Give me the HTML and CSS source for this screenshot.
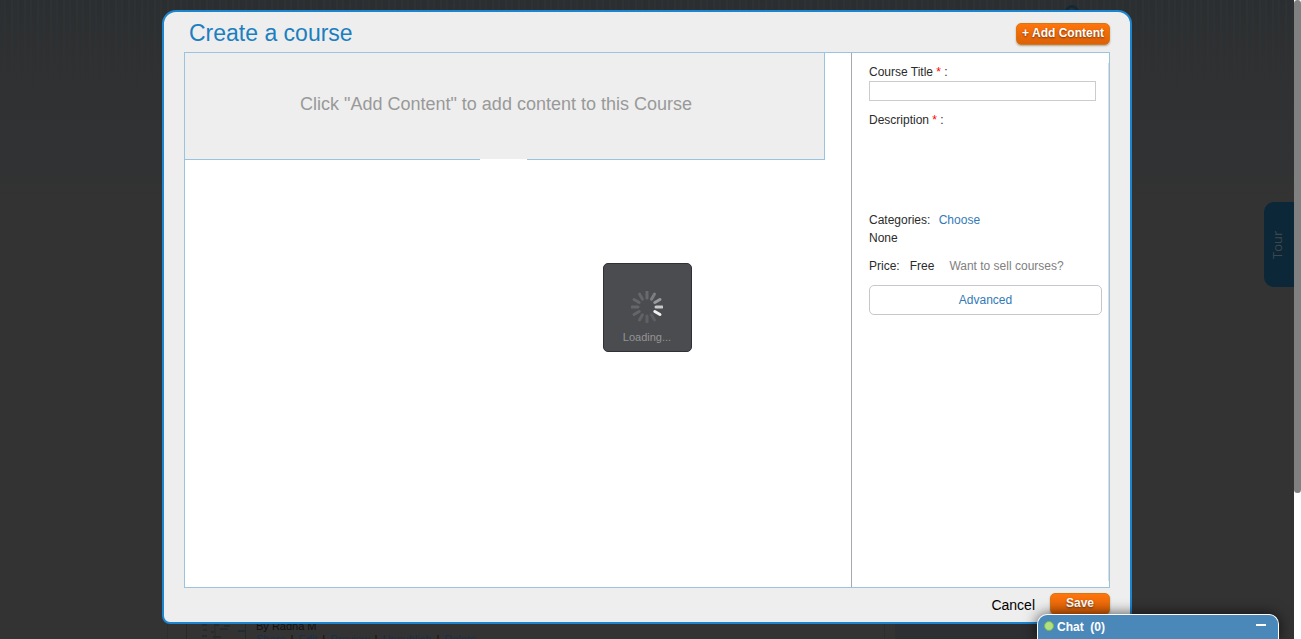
FILE: index.html
```html
<!DOCTYPE html>
<html lang="en">
<head>
<meta charset="utf-8">
<title>Create a course</title>
<link rel="stylesheet" href="styles.css">
</head>
<body>
<div class="viewport">
  <div class="page" aria-hidden="true">
    <span class="help-dot"></span>
    <div class="listing">
      <div class="course">
        <svg class="thumb" width="60" height="24" viewBox="0 0 60 24">
          <path d="M0 0V24M60 0V24" stroke="#202020"/>
          <path d="M29 0V24" stroke="#2d2f2f" stroke-width="2"/>
          <path d="M16 8h5M28 8h5M38 9h6M17 13h4M25 15h3M34 12h8M16 19h5M27 20h8" stroke="#282a2b" stroke-width="2"/>
          <path d="M52 14h8" stroke="#202c37" stroke-width="2"/>
        </svg>
        <div class="course-info">
          <div class="author">By Radha M</div>
          <div class="actions"><a href="#">Share</a> | <a href="#">Edit</a> | <a href="#">Preview</a> | <a href="#">Unpublish</a> | <a href="#">Delete</a></div>
        </div>
      </div>
      <div class="side-box"></div>
    </div>
    <div class="tour">Tour</div>
  </div>

  <main class="modal" role="dialog" aria-labelledby="dialog-title">
    <header class="modal-header">
      <h1 id="dialog-title">Create a course</h1>
      <button class="btn" type="button">+ Add Content</button>
    </header>
    <form class="panel">
      <section class="content">
        <p class="dropzone">Click "Add Content" to add content to this Course</p>
      </section>
      <aside class="details">
        <div class="fields">
          <label for="title">Course Title <span class="required">*</span> :</label>
          <input class="title-input" id="title" type="text">
          <div class="description">Description <span class="required">*</span> :</div>
          <div class="categories">Categories: <a class="choose" href="#">Choose</a></div>
          <div class="none">None</div>
          <div class="price"><span>Price:</span><span>Free</span><a class="sell" href="#">Want to sell courses?</a></div>
          <button class="advanced" type="button">Advanced</button>
        </div>
      </aside>
    </form>
    <footer class="modal-footer">
      <button class="cancel" type="button">Cancel</button>
      <button class="btn save" type="button">Save</button>
    </footer>
  </main>

  <div class="loading" role="status">
    <svg width="32" height="32" viewBox="-16 -16 32 32" stroke-width="3" stroke-linecap="round">
      <path d="M9 0H15" stroke="#c9c9c9"/>
      <path d="M9 0H15" stroke="#f0f0f0" transform="rotate(30)"/>
      <path d="M9 0H15" stroke="#5c5d60" transform="rotate(60)"/>
      <path d="M9 0H15" stroke="#5f6063" transform="rotate(90)"/>
      <path d="M9 0H15" stroke="#616265" transform="rotate(120)"/>
      <path d="M9 0H15" stroke="#646567" transform="rotate(150)"/>
      <path d="M9 0H15" stroke="#656668" transform="rotate(180)"/>
      <path d="M9 0H15" stroke="#656668" transform="rotate(210)"/>
      <path d="M9 0H15" stroke="#656668" transform="rotate(240)"/>
      <path d="M9 0H15" stroke="#68696b" transform="rotate(270)"/>
      <path d="M9 0H15" stroke="#7d7d7f" transform="rotate(300)"/>
      <path d="M9 0H15" stroke="#9a9a9b" transform="rotate(330)"/>
    </svg>
    <span>Loading...</span>
  </div>

  <button class="chat" type="button">
    <span class="online"></span>
    <span class="chat-label">Chat&nbsp; (0)</span>
    <span class="minimize"></span>
  </button>
</div>
<div class="scroll-track"><div class="scroll-thumb"></div></div>
</body>
</html>
```
FILE: styles.css
```css
* {
  box-sizing: border-box;
}

body {
  margin: 0;
  height: 100vh;
  display: flex;
  overflow: hidden;
  font: 12px/18px "Liberation Sans", Arial, sans-serif;
  color: #2b2b2b;
}

a {
  color: #337ab7;
  text-decoration: none;
}

button {
  font-family: inherit;
  cursor: pointer;
}

.viewport {
  position: relative;
  flex: 1;
  display: flex;
  flex-direction: column;
  align-items: center;
  padding: 10px 20px 15px;
  overflow: hidden;
  background: #333;
}

/* Dimmed page behind the dialog */
.page {
  position: absolute;
  inset: 0;
  background:
    linear-gradient(rgba(48, 49, 51, 0) 0, #303133 90px, #313233 170px, #333 200px),
    repeating-linear-gradient(90deg, #2b2f31 0 4px, #2d3132 4px 6px, #2b2e30 6px 11px, #2e3233 11px 13px);
}

.help-dot {
  position: absolute;
  top: 5px;
  left: 1065px;
  width: 14px;
  height: 14px;
  border: 3px solid #142838;
  border-radius: 50%;
}

.listing {
  position: absolute;
  top: 617px;
  left: 167px;
  width: 960px;
  height: 30px;
  display: flex;
  gap: 10px;
  font-size: 11px;
  line-height: 12px;
  color: #111;
}

.course {
  flex: 1;
  display: flex;
  gap: 10px;
  padding-left: 18px;
  border-left: 1px solid #2e2e2e;
  border-right: 1px solid #2e2e2e;
}

.actions {
  padding-top: 1px;
}

.actions a {
  margin-right: 2px;
  color: #12324d;
}

.actions a + a {
  margin-left: 2px;
}

.author {
  padding-top: 3px;
}

.side-box {
  width: 232px;
  background: #2e2f32;
}

.tour {
  position: absolute;
  top: 202px;
  right: 0;
  width: 30px;
  height: 85px;
  border-radius: 0 10px 10px 0;
  background: #0b2738;
  color: #40474c;
  font: 13px/26px "Open Sans", sans-serif;
  text-align: center;
  writing-mode: vertical-rl;
  transform: rotate(180deg);
}

/* Dialog */
.modal {
  position: relative;
  flex: 1;
  width: 100%;
  max-width: 970px;
  display: flex;
  flex-direction: column;
  padding: 0 20px;
  border: 2px solid #1b85cf;
  border-radius: 14px 14px 8px 8px;
  background: #eee;
}

.modal-header {
  height: 40px;
  display: flex;
  justify-content: space-between;
  align-items: center;
  padding-left: 5px;
}

h1 {
  margin: 0;
  padding-top: 2px;
  font-size: 23px;
  line-height: 28px;
  font-weight: normal;
  color: #1c7fc0;
}

.btn {
  height: 22px;
  padding: 0 5px 2px;
  margin-top: 3px;
  border: 1px solid #d5780f;
  border-radius: 5px;
  background: linear-gradient(#ff740c, #dd6108);
  box-shadow: 0 1px 2px rgba(0, 0, 0, .3);
  color: #fff;
  font-size: 12px;
  font-weight: bold;
  text-shadow: 0 1px 2px rgba(0, 0, 0, .5);
}

.panel {
  flex: 1;
  display: flex;
  border: 1px solid #99c3df;
  background: #fff;
}

.content {
  flex: 1;
  padding-right: 26px;
}

.dropzone {
  position: relative;
  margin: 0;
  height: 107px;
  padding: 40px 17px 0 0;
  border: solid #99c3df;
  border-width: 0 1px 1px 0;
  background: #eee;
  color: #999;
  font-size: 18px;
  line-height: 22px;
  text-align: center;
}

.dropzone::after {
  content: "";
  position: absolute;
  bottom: -1px;
  left: 50%;
  width: 47px;
  height: 1px;
  margin-left: -25px;
  background: #fff;
}

.details {
  width: 258px;
  padding: 10px 0 6px;
  border-left: 1px solid #a5a9ad;
}

.fields {
  height: 100%;
  display: flex;
  flex-direction: column;
  padding: 0 6px 0 17px;
  border-right: 1px solid #ddd;
}

.required {
  color: #f00;
}

.title-input {
  width: 227px;
  height: 20px;
  border: 1px solid #ccc;
  background: #fff;
}

.description {
  height: 110px;
  padding-top: 10px;
}

.choose {
  margin-left: 5px;
}

.price {
  display: flex;
  gap: 10px;
  padding: 10px 0;
}

.sell {
  margin-left: 5px;
  color: #808080;
}

.advanced {
  height: 30px;
  border: 1px solid #c4c8cc;
  border-radius: 5px;
  background: #fff;
  color: #337ab7;
  font-size: 12px;
}

.modal-footer {
  height: 34px;
  display: flex;
  justify-content: flex-end;
  align-items: center;
  gap: 15px;
}

.cancel {
  padding: 0;
  border: 0;
  background: none;
  color: #000;
  font-size: 14px;
}

.save {
  width: 60px;
  margin: 0 0 2px;
}

/* Overlays */
.loading {
  position: absolute;
  top: 263px;
  left: 50%;
  width: 89px;
  height: 89px;
  margin-left: -44px;
  padding: 27px 1px 0 0;
  border: 1px solid #303134;
  border-radius: 5px;
  background: #4b4c50;
  display: flex;
  flex-direction: column;
  align-items: center;
  gap: 5px;
  color: #949494;
  font-size: 11px;
}

.chat {
  position: absolute;
  right: 15px;
  bottom: 0;
  width: 242px;
  height: 25px;
  display: flex;
  align-items: center;
  gap: 3px;
  padding: 0 12px 0 6px;
  border: 1px solid #fff;
  border-bottom: 0;
  border-radius: 10px 10px 0 0;
  background: #4a88ba;
  box-shadow: 0 0 14px rgba(0, 0, 0, .7);
  color: #fff;
  font-size: 12px;
  font-weight: bold;
}

.online {
  width: 10px;
  height: 10px;
  margin-bottom: 2px;
  border: 1px solid #79b653;
  border-radius: 50%;
  background: #b0e080;
}

.chat-label {
  flex: 1;
  text-align: left;
}

.minimize {
  width: 10px;
  height: 2px;
  margin-bottom: 4px;
  background: #fff;
}

.scroll-track {
  width: 7px;
  background: #fff;
}

.scroll-thumb {
  height: 493px;
  border-radius: 4px;
  background: #808080;
}
```
